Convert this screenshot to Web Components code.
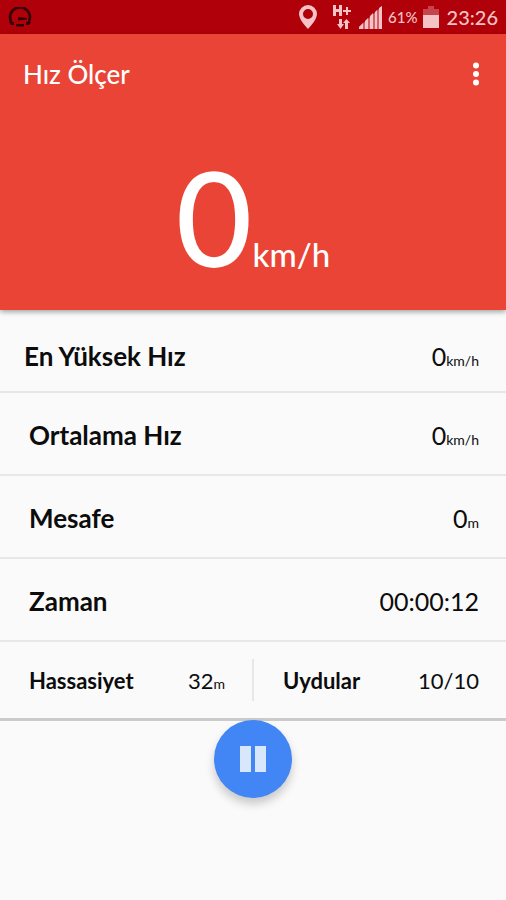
<!DOCTYPE html>
<html lang="tr">
<head>
<meta charset="utf-8">
<meta name="viewport" content="width=device-width, initial-scale=1">
<title>Hız Ölçer</title>
<style>
  body {
    margin: 0;
    min-height: 100vh;
    background: #fafafa;
    color: #0c0c0c;
    font-family: Lato, "Open Sans", sans-serif;
  }
</style>
</head>
<body>
<speed-app></speed-app>

<script>
class StatusBar extends HTMLElement {
  constructor() {
    super();
    this.attachShadow({ mode: 'open' });
  }

  connectedCallback() {
    this.shadowRoot.innerHTML = `
      <style>
        :host {
          display: flex;
          align-items: center;
          height: 34px;
          padding: 0 8px;
          background: #b00009;
          color: #f3c3c6;
        }
        svg {
          display: block;
          fill: currentColor;
        }
        .gauge {
          color: #310003;
          margin-right: auto;
        }
        .pin {
          margin-right: 16px;
        }
        .data {
          margin-right: 8px;
        }
        .signal {
          margin-right: 6px;
        }
        .percent {
          font-size: 15px;
          line-height: 34px;
          font-weight: 500;
          margin-right: 5px;
        }
        .battery {
          margin-right: 8px;
        }
        .clock {
          font-size: 20px;
          line-height: 34px;
          font-weight: 500;
        }
      </style>
      <svg class="gauge" width="24" height="20" viewBox="0 0 24 20">
        <path d="M4.500 17A10 10 0 1 1 19.500 17" fill="none" stroke="currentColor" stroke-width="2.6"/>
        <path d="M10 10l9 1v1.500l-9 1zM8 17h8v2.500h-8zM1 15h5v3h-3zM18 15h5l-2 3h-3z"/>
      </svg>
      <svg class="pin" width="18" height="24" viewBox="0 0 18 24">
        <path fill-rule="evenodd" d="M9 0a9 9 0 0 0-9 9c0 6 9 15 9 15s9-9 9-15a9 9 0 0 0-9-9zm0 4a5 5 0 1 1 0 10 5 5 0 0 1 0-10z"/>
      </svg>
      <svg class="data" width="18" height="26" viewBox="0 0 18 26">
        <path d="M0 1h3v4h3V1h3v11H6V8H3v4H0zM13 3h2v3h3v2h-3v3h-2V8h-3V6h3z"/>
        <path d="M6 15h3v5h2l-3.500 5L4 20h2zM12 25h3v-6h2l-3.500-4-3.500 4h2z"/>
      </svg>
      <svg class="signal" width="23" height="23" viewBox="0 0 23 23">
        <path d="M0 23v-2l4-4v6zM6 23v-8l3-3v11zM11 23V10l3-3v16zM16 23V6l2-2v19zM20 23V2l3-2v23z"/>
        <path opacity=".5" d="M0 23v-2L23 0v23z"/>
      </svg>
      <span class="percent">61%</span>
      <svg class="battery" width="16" height="22" viewBox="0 0 16 22">
        <path opacity=".35" d="M5 0h6v3h5v6H0V3h5z"/>
        <path d="M0 9h16v13H0z"/>
      </svg>
      <span class="clock">23:26</span>
    `;
  }
}

class SpeedHeader extends HTMLElement {
  constructor() {
    super();
    this.attachShadow({ mode: 'open' });
  }

  connectedCallback() {
    this.shadowRoot.innerHTML = `
      <style>
        :host {
          display: block;
          position: relative;
          background: #e94435;
          color: #fff;
          box-shadow: 0 2px 5px rgba(0, 0, 0, 0.35);
        }
        .toolbar {
          display: flex;
          align-items: center;
          justify-content: space-between;
          height: 80px;
          padding: 0 18px 0 23px;
        }
        h1 {
          margin: 0;
          font-size: 26px;
          line-height: 32px;
          font-weight: 500;
        }
        button {
          display: grid;
          place-items: center;
          width: 24px;
          height: 40px;
          padding: 0;
          border: none;
          background: none;
          color: inherit;
          cursor: pointer;
        }
        .speed {
          display: flex;
          align-items: baseline;
          justify-content: center;
          height: 196px;
          line-height: 204px;
        }
        .value {
          font-size: 132px;
          font-weight: 500;
        }
        .unit {
          font-size: 33px;
          font-weight: 500;
        }
      </style>
      <div class="toolbar">
        <h1><slot name="title"></slot></h1>
        <button type="button" aria-label="Menü">
          <svg width="8" height="24" viewBox="0 0 8 24" fill="currentColor">
            <circle cx="4" cy="3.500" r="3"/>
            <circle cx="4" cy="12" r="3"/>
            <circle cx="4" cy="20.500" r="3"/>
          </svg>
        </button>
      </div>
      <div class="speed">
        <span class="value"><slot name="value"></slot></span>
        <span class="unit"><slot name="unit"></slot></span>
      </div>
    `;
  }
}

class StatRow extends HTMLElement {
  constructor() {
    super();
    this.attachShadow({ mode: 'open' });
  }

  connectedCallback() {
    this.shadowRoot.innerHTML = `
      <style>
        :host {
          display: flex;
          align-items: baseline;
          justify-content: space-between;
          box-sizing: border-box;
          height: 83px;
          padding: 0 27px 0 29px;
          border-bottom: 2px solid #e7e7e7;
          line-height: 84px;
        }
        :host([lead]) {
          padding-left: 24px;
          line-height: 92px;
        }
        :host([compact]) {
          flex: 1;
          height: 76px;
          border: none;
          line-height: 78px;
        }
        .label {
          font-size: 26px;
          font-weight: 700;
        }
        .value {
          font-size: 25px;
        }
        .unit {
          font-size: 14px;
        }
        :host([compact]) .label,
        :host([compact]) .value {
          font-size: 22px;
        }
      </style>
      <span class="label"><slot></slot></span>
      <span class="value"><slot name="value"></slot><span class="unit"><slot name="unit"></slot></span></span>
    `;
  }
}

class PauseButton extends HTMLElement {
  constructor() {
    super();
    this.attachShadow({ mode: 'open' });
  }

  connectedCallback() {
    this.shadowRoot.innerHTML = `
      <style>
        :host {
          display: flex;
          justify-content: center;
        }
        button {
          display: grid;
          place-items: center;
          width: 78px;
          height: 78px;
          padding: 0;
          border: none;
          border-radius: 50%;
          background: #4285f4;
          color: #d9e7fd;
          box-shadow: 0 6px 10px rgba(0, 0, 0, 0.2);
          cursor: pointer;
        }
      </style>
      <button type="button" aria-label="Duraklat">
        <svg width="28" height="28" viewBox="0 0 28 28" fill="currentColor">
          <path d="M1 1h11v26H1zM16 1h11v26H16z"/>
        </svg>
      </button>
    `;
  }
}

class SpeedApp extends HTMLElement {
  constructor() {
    super();
    this.attachShadow({ mode: 'open' });
  }

  connectedCallback() {
    this.shadowRoot.innerHTML = `
      <style>
        :host {
          display: block;
        }
        .pair {
          display: flex;
          align-items: center;
          margin-bottom: -1px;
          border-bottom: 3px solid #cbcbcb;
        }
        .divider {
          width: 2px;
          height: 42px;
          background: #e7e7e7;
        }
        pause-button {
          position: relative;
        }
      </style>
      <status-bar></status-bar>
      <speed-header>
        <span slot="title">Hız Ölçer</span>
        <span slot="value">0</span>
        <span slot="unit">km/h</span>
      </speed-header>
      <main>
        <stat-row lead>En Yüksek Hız<span slot="value">0</span><span slot="unit">km/h</span></stat-row>
        <stat-row>Ortalama Hız<span slot="value">0</span><span slot="unit">km/h</span></stat-row>
        <stat-row>Mesafe<span slot="value">0</span><span slot="unit">m</span></stat-row>
        <stat-row>Zaman<span slot="value">00:00:12</span></stat-row>
        <div class="pair">
          <stat-row compact>Hassasiyet<span slot="value">32</span><span slot="unit">m</span></stat-row>
          <div class="divider"></div>
          <stat-row compact>Uydular<span slot="value">10/10</span></stat-row>
        </div>
        <pause-button></pause-button>
      </main>
    `;
  }
}

customElements.define('status-bar', StatusBar);
customElements.define('speed-header', SpeedHeader);
customElements.define('stat-row', StatRow);
customElements.define('pause-button', PauseButton);
customElements.define('speed-app', SpeedApp);
</script>
</body>
</html>
